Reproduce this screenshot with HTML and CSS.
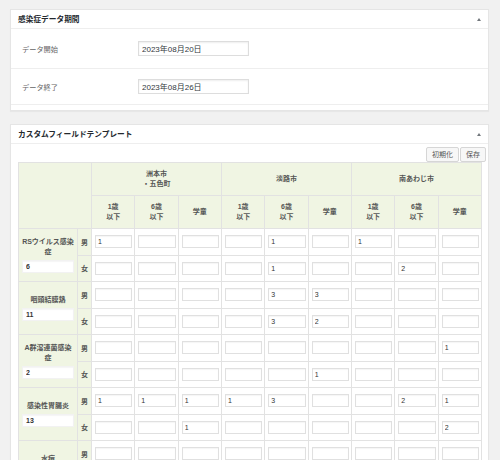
FILE: index.html
```html
<!DOCTYPE html>
<html lang="ja">
<head>
<meta charset="utf-8">
<title>感染症データ</title>
<link rel="stylesheet" href="styles.css">
</head>
<body>
<div class="wrap">
  <div class="postbox">
    <div class="hndle"><h2>感染症データ期間</h2><span class="toggle"></span></div>
    <div class="period">
      <div class="field f1"><label>データ開始</label><input class="date" value="2023年08月20日"></div>
      <div class="field f2"><label>データ終了</label><input class="date" value="2023年08月26日"></div>
    </div>
  </div>

  <div class="postbox">
    <div class="hndle"><h2>カスタムフィールドテンプレート</h2><span class="toggle"></span></div>
    <div class="cft">
      <div class="actions"><button>初期化</button><button>保存</button></div>
      <table class="grid">
        <colgroup><col class="c-name"><col class="c-sex"><col><col><col><col><col><col><col><col><col></colgroup>
        <thead>
          <tr><th rowspan="2" colspan="2"></th><th colspan="3">洲本市<br>・五色町</th><th colspan="3">淡路市</th><th colspan="3">南あわじ市</th></tr>
          <tr><th>1歳<br>以下</th><th>6歳<br>以下</th><th>学童</th><th>1歳<br>以下</th><th>6歳<br>以下</th><th>学童</th><th>1歳<br>以下</th><th>6歳<br>以下</th><th>学童</th></tr>
        </thead>
        <tbody>
          <tr><td class="name" rowspan="2">RSウイルス感染症<input class="total" value="6"></td><td class="sex">男</td>
            <td class="cell"><input class="v" value="1"></td><td class="cell"><input class="v"></td><td class="cell"><input class="v"></td>
            <td class="cell"><input class="v"></td><td class="cell"><input class="v" value="1"></td><td class="cell"><input class="v"></td>
            <td class="cell"><input class="v" value="1"></td><td class="cell"><input class="v"></td><td class="cell"><input class="v"></td></tr>
          <tr><td class="sex">女</td>
            <td class="cell"><input class="v"></td><td class="cell"><input class="v"></td><td class="cell"><input class="v"></td>
            <td class="cell"><input class="v"></td><td class="cell"><input class="v" value="1"></td><td class="cell"><input class="v"></td>
            <td class="cell"><input class="v"></td><td class="cell"><input class="v" value="2"></td><td class="cell"><input class="v"></td></tr>

          <tr><td class="name" rowspan="2">咽頭結膜熱<input class="total" value="11"></td><td class="sex">男</td>
            <td class="cell"><input class="v"></td><td class="cell"><input class="v"></td><td class="cell"><input class="v"></td>
            <td class="cell"><input class="v"></td><td class="cell"><input class="v" value="3"></td><td class="cell"><input class="v" value="3"></td>
            <td class="cell"><input class="v"></td><td class="cell"><input class="v"></td><td class="cell"><input class="v"></td></tr>
          <tr><td class="sex">女</td>
            <td class="cell"><input class="v"></td><td class="cell"><input class="v"></td><td class="cell"><input class="v"></td>
            <td class="cell"><input class="v"></td><td class="cell"><input class="v" value="3"></td><td class="cell"><input class="v" value="2"></td>
            <td class="cell"><input class="v"></td><td class="cell"><input class="v"></td><td class="cell"><input class="v"></td></tr>

          <tr><td class="name" rowspan="2">A群溶連菌感染症<input class="total" value="2"></td><td class="sex">男</td>
            <td class="cell"><input class="v"></td><td class="cell"><input class="v"></td><td class="cell"><input class="v"></td>
            <td class="cell"><input class="v"></td><td class="cell"><input class="v"></td><td class="cell"><input class="v"></td>
            <td class="cell"><input class="v"></td><td class="cell"><input class="v"></td><td class="cell"><input class="v" value="1"></td></tr>
          <tr><td class="sex">女</td>
            <td class="cell"><input class="v"></td><td class="cell"><input class="v"></td><td class="cell"><input class="v"></td>
            <td class="cell"><input class="v"></td><td class="cell"><input class="v"></td><td class="cell"><input class="v" value="1"></td>
            <td class="cell"><input class="v"></td><td class="cell"><input class="v"></td><td class="cell"><input class="v"></td></tr>

          <tr><td class="name" rowspan="2">感染性胃腸炎<input class="total" value="13"></td><td class="sex">男</td>
            <td class="cell"><input class="v" value="1"></td><td class="cell"><input class="v" value="1"></td><td class="cell"><input class="v" value="1"></td>
            <td class="cell"><input class="v" value="1"></td><td class="cell"><input class="v" value="3"></td><td class="cell"><input class="v"></td>
            <td class="cell"><input class="v"></td><td class="cell"><input class="v" value="2"></td><td class="cell"><input class="v" value="1"></td></tr>
          <tr><td class="sex">女</td>
            <td class="cell"><input class="v"></td><td class="cell"><input class="v"></td><td class="cell"><input class="v" value="1"></td>
            <td class="cell"><input class="v"></td><td class="cell"><input class="v"></td><td class="cell"><input class="v"></td>
            <td class="cell"><input class="v"></td><td class="cell"><input class="v"></td><td class="cell"><input class="v" value="2"></td></tr>

          <tr><td class="name" rowspan="2">水痘<input class="total" value=""></td><td class="sex">男</td>
            <td class="cell"><input class="v"></td><td class="cell"><input class="v"></td><td class="cell"><input class="v"></td>
            <td class="cell"><input class="v"></td><td class="cell"><input class="v"></td><td class="cell"><input class="v"></td>
            <td class="cell"><input class="v"></td><td class="cell"><input class="v"></td><td class="cell"><input class="v"></td></tr>
          <tr><td class="sex">女</td>
            <td class="cell"><input class="v"></td><td class="cell"><input class="v"></td><td class="cell"><input class="v"></td>
            <td class="cell"><input class="v"></td><td class="cell"><input class="v"></td><td class="cell"><input class="v"></td>
            <td class="cell"><input class="v"></td><td class="cell"><input class="v"></td><td class="cell"><input class="v"></td></tr>
        </tbody>
      </table>
    </div>
  </div>
</div>
</body>
</html>
```

FILE: styles.css
```css
* { box-sizing: border-box; }

html, body { overflow: hidden; }

body {
  margin: 0;
  background: #f1f1f1;
  font-family: "Liberation Sans", "Noto Sans CJK JP", sans-serif;
  color: #444;
}

.wrap { padding: 9px 11px 0 10px; }

.postbox {
  background: #fff;
  border: 1px solid #e5e5e5;
  box-shadow: 0 1px 1px rgba(0, 0, 0, 0.04);
  margin-bottom: 13px;
}

.hndle {
  height: 19px;
  border-bottom: 1px solid #eeeeee;
  display: flex;
  align-items: center;
  justify-content: space-between;
  padding: 0 7px;
}

.hndle h2 {
  margin: 0;
  font-family: "Noto Sans CJK JP", sans-serif;
  font-size: 7.7px;
  line-height: 10px;
  font-weight: bold;
  color: #23282d;
}

.toggle {
  width: 0;
  height: 0;
  border-left: 2.5px solid transparent;
  border-right: 2.5px solid transparent;
  border-bottom: 3px solid #72777c;
  margin-right: 0;
}

/* period box */
.period { padding-bottom: 5px; }

.field {
  display: flex;
  align-items: center;
  padding-left: 11px;
  border-bottom: 1px solid #eeeeee;
}
.f1 { height: 40px; }
.f2 { height: 36px; }

.field label {
  width: 116px;
  font-family: "Noto Sans CJK JP", sans-serif;
  font-size: 7.2px;
  color: #666;
}

.date {
  width: 111px;
  height: 15px;
  border: 1px solid #dddddd;
  box-shadow: inset 0 1px 2px rgba(0, 0, 0, 0.07);
  padding: 0 3px;
  font-family: inherit;
  font-size: 8px;
  color: #32373c;
  background: #fff;
  outline: none;
}

/* custom field template box */
.cft { padding: 3px 6px 0 7px; }

.actions {
  display: flex;
  justify-content: flex-end;
  gap: 1px;
  margin-right: -4px;
}

.actions button {
  height: 15px;
  padding: 0 5px;
  border: 1px solid #d6d6d6;
  border-radius: 2px;
  background: #f7f7f7;
  font-family: "Noto Sans CJK JP", sans-serif;
  font-size: 7px;
  color: #555;
  line-height: 13px;
}

.grid {
  width: 464px;
  border-collapse: collapse;
  table-layout: fixed;
  font-size: 7px;
  font-weight: bold;
  color: #555;
}

.c-name { width: 59px; }
.c-sex { width: 14px; }

.grid th, .grid td {
  border: 1px solid #e2e2e2;
  padding: 0;
  text-align: center;
  vertical-align: middle;
}

.grid thead tr { height: 33px; }

.grid thead th {
  background: #f0f5e3;
  line-height: 10px;
  font-weight: bold;
}

.grid tbody tr { height: 26.5px; }

.grid .name {
  background: #f0f5e3;
  padding: 0 3px;
  line-height: 10px;
}

.grid .sex { background: #f0f5e3; }

.grid .cell { padding: 0 2px 0 3px; }

.v, .total {
  display: block;
  width: 100%;
  height: 13px;
  border: 1px solid #e0e0e0;
  background: #fff;
  font-family: inherit;
  font-size: 7px;
  color: #333;
  padding: 0 2px;
  outline: none;
  box-shadow: inset 0 1px 1px rgba(0, 0, 0, 0.04);
}

.total {
  margin-top: 3px;
  padding: 0 3px;
  font-weight: bold;
  border-color: #f2f2f2;
}
```
